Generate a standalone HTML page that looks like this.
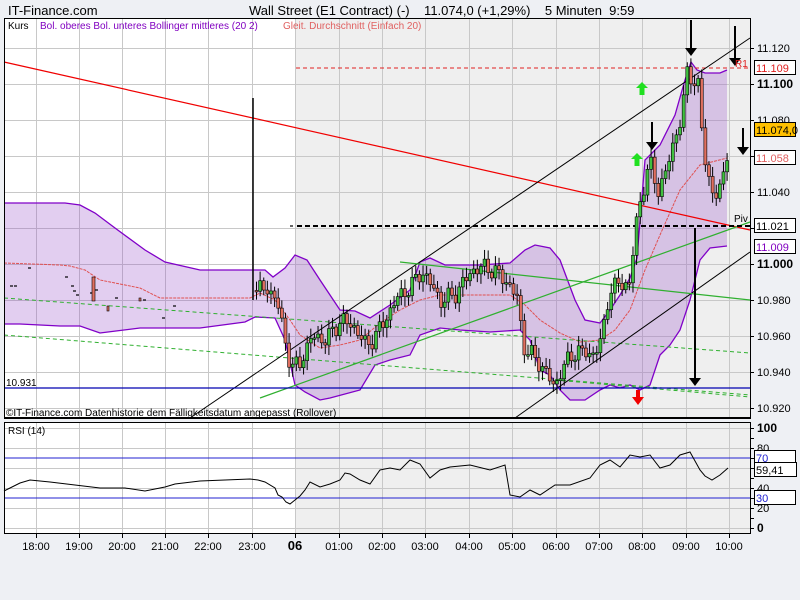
<!DOCTYPE html>
<html><head><meta charset="utf-8"><style>
html,body{margin:0;padding:0;background:#eef0f4;width:800px;height:600px;overflow:hidden}
svg{display:block;font-family:"Liberation Sans",sans-serif}
</style></head><body>
<svg id="s" width="800" height="600" xmlns="http://www.w3.org/2000/svg">
<rect width="800" height="600" fill="#eef0f4"/>
<text x="8" y="15" font-size="13" fill="#000">IT-Finance.com</text>
<text x="249" y="15" font-size="13" fill="#000" xml:space="preserve">Wall Street (E1 Contract) (-)    11.074,0 (+1,29%)    5 Minuten  9:59</text>
<rect x="4" y="18" width="746" height="400" fill="#fff"/>
<rect x="296" y="18" width="454" height="400" fill="#efefef"/>
<rect x="4" y="422" width="746" height="111" fill="#fff"/>
<rect x="296" y="422" width="454" height="111" fill="#efefef"/>
<g id="grid" stroke="#c8c8c8" stroke-width="1"></g>
<g id="bands"></g>
<g id="lines"></g>
<g id="candles"></g>
<g id="over"></g>
<rect x="4.5" y="18.5" width="746" height="400" fill="none" stroke="#000"/>
<line x1="4" y1="418" x2="751" y2="418" stroke="#000" stroke-width="2"/>
<rect x="4.5" y="422.5" width="746" height="111" fill="none" stroke="#000"/>
<text x="8" y="29" font-size="10">Kurs</text>
<text x="40" y="29" font-size="10" fill="#8000c0">Bol. oberes Bol. unteres Bollinger mittleres (20 2)</text>
<text x="283" y="29" font-size="10" fill="#e06060">Gleit. Durchschnitt (Einfach 20)</text>
<text x="6" y="386" font-size="10">10.931</text>
<text x="6" y="416" font-size="10">©IT-Finance.com  Datenhistorie dem Fälligkeitsdatum angepasst (Rollover)</text>
<text x="8" y="434" font-size="10">RSI (14)</text>
<g id="axis" font-size="11"></g>
</svg>
<script>
const NS="http://www.w3.org/2000/svg";
function el(p,t,a,txt){const e=document.createElementNS(NS,t);for(const k in a)e.setAttribute(k,a[k]);if(txt!=null)e.textContent=txt;document.getElementById(p).appendChild(e);return e;}
const hx=[36,79,122,165,208,252,295,339,382,425,469,512,556,599,642,686,729];
const hl=["18:00","19:00","20:00","21:00","22:00","23:00","06","01:00","02:00","03:00","04:00","05:00","06:00","07:00","08:00","09:00","10:00"];
hx.forEach((x,i)=>{el("grid","line",{x1:x+.5,y1:18,x2:x+.5,y2:418});el("grid","line",{x1:x+.5,y1:422,x2:x+.5,y2:533});
 el("axis","line",{x1:x+.5,y1:534,x2:x+.5,y2:538,stroke:"#000"});
 el("axis","text",{x:x,y:550,"text-anchor":"middle","font-weight":i==6?"bold":"normal","font-size":i==6?13:11},hl[i]);});
for(let i=0;i<11;i++){const y=48+i*36;el("grid","line",{x1:4,y1:y+.5,x2:750,y2:y+.5});
 el("axis","line",{x1:750,y1:y+.5,x2:754,y2:y+.5,stroke:"#000"});
 const v=(11120-i*20);const s=(v/1000).toFixed(3);const b=(v%100==0);
 el("axis","text",{x:757,y:y+4,"font-weight":b?"bold":"normal","font-size":b?12:11},s);}
for(let i=0;i<=10;i++){const y=528-i*10;if(i%2==0){el("grid","line",{x1:4,y1:y+.5,x2:750,y2:y+.5});}
 el("axis","line",{x1:750,y1:y+.5,x2:754,y2:y+.5,stroke:"#000"});}
[[100,"bold"],[80,""],[40,""],[20,""],[0,"bold"]].forEach(([v,w])=>el("axis","text",{x:757,y:528-v+4,"font-weight":w||"normal","font-size":w?12:11},String(v)));
const up=[[4,203],[65,203],[80,205],[95,213],[115,228],[145,250],[165,262],[200,270],[265,270],[273,277],[285,268],[295,255],[307,260],[320,280],[340,310],[355,311],[370,318],[390,305],[410,290],[420,262],[430,258],[445,265],[480,265],[510,263],[525,250],[535,245],[550,248],[560,260],[575,300],[585,320],[600,323],[610,310],[620,295],[630,278],[637,258],[645,160],[660,145],[675,115],[685,80],[691,62],[697,70],[705,73],[720,73],[727,70]];
const lo=[[727,246],[710,248],[700,260],[690,300],[680,330],[670,345],[660,355],[650,385],[640,390],[630,385],[620,388],[610,385],[600,390],[585,400],[570,400],[560,390],[550,375],[540,370],[530,340],[520,330],[490,332],[460,330],[440,328],[420,335],[410,355],[390,360],[375,365],[360,390],[330,398],[320,400],[305,392],[295,385],[285,340],[275,318],[255,317],[245,322],[200,328],[140,328],[100,333],[80,326],[60,326],[20,324],[4,324]];
const pts=up.concat(lo).map(p=>p.join(",")).join(" ");
el("bands","polygon",{points:pts,fill:"rgba(150,80,200,0.28)"});
el("bands","polyline",{points:up.map(p=>p.join(",")).join(" "),fill:"none",stroke:"#8000c8","stroke-width":1.3});
el("bands","polyline",{points:lo.map(p=>p.join(",")).join(" "),fill:"none",stroke:"#8000c8","stroke-width":1.3});
const ma=[[4,263],[60,265],[70,266],[85,270],[100,280],[140,288],[150,293],[160,298],[250,298],[260,293],[275,300],[290,320],[300,335],[320,348],[340,345],[360,340],[380,323],[400,310],[420,300],[440,295],[480,295],[510,295],[525,305],[540,320],[560,333],[580,342],[600,340],[615,330],[630,310],[645,270],[660,235],[680,190],[700,165],[727,158]];
el("bands","polyline",{points:ma.map(p=>p.join(",")).join(" "),fill:"none",stroke:"#e05050","stroke-width":1,"stroke-dasharray":"3,1"});
const L=(x1,y1,x2,y2,c,w,d)=>el("lines","line",{x1,y1,x2,y2,stroke:c,"stroke-width":w||1,"stroke-dasharray":d||"none"});
L(4,298,750,353,"#30b030",1,"4,3");L(4,335,750,395,"#30b030",1,"4,3");L(555,380,750,397,"#30b030",1,"4,3");
L(296,68,750,68,"#e02020",1,"4,3");
L(4,62,750,230,"#f00000",1.2);
L(190,418,750,38,"#000",1);L(515,418,750,252,"#000",1);
L(260,398,750,222,"#30b030",1.2);L(400,262,750,300,"#30b030",1.2);
L(297,226,750,226,"#000",2,"5,3");
L(4,388,750,388,"#0000b0",1.3);
L(253,98,253,300,"#000",1.5);
const path=[[252,290],[265,292],[275,305],[283,345],[290,378],[300,370],[310,345],[325,345],[340,320],[355,325],[365,340],[380,318],[395,290],[410,280],[420,268],[430,285],[440,305],[455,300],[470,280],[485,275],[500,282],[510,290],[516,300],[522,345],[535,355],[545,365],[553,380],[560,360],[575,342],[590,350],[600,340],[608,290],[620,288],[628,290],[635,230],[640,205],[648,170],[656,200],[663,185],[672,150],[680,120],[686,75],[692,80],[697,85],[702,150],[710,185],[716,190],[720,180],[726,140]];
function py(x){for(let i=1;i<path.length;i++){if(x<=path[i][0]){const a=path[i-1],b=path[i];return a[1]+(b[1]-a[1])*(x-a[0])/(b[0]-a[0]);}}return path[path.length-1][1];}
let prev=py(255);
for(let x=255;x<=726;x+=3.62){const tgt=py(x)+Math.sin(x*1.7)*9+Math.sin(x*0.53)*6+Math.cos(x*3.1)*4;const o=prev,c=tgt;const hi=Math.min(o,c)-3-Math.abs(Math.sin(x*2.3))*7,l=Math.max(o,c)+3+Math.abs(Math.cos(x*1.9))*7;
 el("candles","line",{x1:x+1.5,y1:hi,x2:x+1.5,y2:l,stroke:"#000"});
 const g=c<o;el("candles","rect",{x:x,y:Math.min(o,c),width:3,height:Math.max(1.5,Math.abs(c-o)),fill:g?"#40c040":"#e07060",stroke:"#000","stroke-width":.6});prev=c;}
[[10,286],[14,286],[28,268],[65,277],[71,286],[73,291],[76,295],[90,293],[95,290],[115,298],[143,300],[162,318],[173,306],[290,226]].forEach(p=>L(p[0],p[1],p[0]+3,p[1],"#000",1.2));
el("candles","rect",{x:92,y:277,width:3,height:24,fill:"#e07060",stroke:"#000","stroke-width":.6});
el("candles","rect",{x:107,y:306,width:2,height:5,fill:"#e07060",stroke:"#000","stroke-width":.6});
el("candles","rect",{x:139,y:298,width:2,height:3,fill:"#e07060",stroke:"#000","stroke-width":.6});
function dn(x,y1,y2){L(x,y1,x,y2-6,"#000",2);el("over","polygon",{points:`${x-6},${y2-8} ${x+6},${y2-8} ${x},${y2}`,fill:"#000"});}
dn(691,20,56);dn(735,26,66);dn(652,122,150);dn(743,128,155);dn(695,228,386);
function upA(x,y,c){el("over","polygon",{points:`${x},${y} ${x+6},${y+6} ${x+2.5},${y+6} ${x+2.5},${y+13} ${x-2.5},${y+13} ${x-2.5},${y+6} ${x-6},${y+6}`,fill:c});}
upA(642,82,"#20e020");upA(637,153,"#20e020");
el("over","polygon",{points:`636,390 640,390 640,397 644,397 638,405 632,397 636,397`,fill:"#f00000"});
el("over","text",{x:735,y:67,"font-size":10,fill:"#e02020"},"R1");
el("over","text",{x:734,y:222,"font-size":10,fill:"#000"},"Piv");
function box(y,t,c,bg){el("axis","rect",{x:754.5,y:y-7.5,width:41,height:14,fill:bg,stroke:"#000"});el("axis","text",{x:756,y:y+4,fill:c,"font-size":11},t);}
box(68,"11.109","#e02020","#fff");box(130,"11.074,0","#000","#ffc000");box(158,"11.058","#e06060","#fff");box(226,"11.021","#000","#fff");box(247,"11.009","#8000c0","#fff");
L(4,458,750,458,"#2020d0",1);L(4,498,750,498,"#2020d0",1);
const r=[[4,491],[10,488],[20,483],[30,480],[50,482],[75,485],[100,488],[125,488],[145,491],[165,487],[175,484],[200,481],[250,479],[258,480],[265,482],[275,488],[278,495],[282,497],[286,502],[290,504],[295,500],[300,496],[305,490],[310,482],[320,487],[330,484],[340,480],[345,473],[350,474],[360,480],[370,484],[380,470],[390,468],[400,470],[410,460],[420,464],[430,478],[440,470],[450,467],[470,465],[490,470],[505,465],[510,495],[520,497],[530,490],[540,495],[555,485],[570,485],[590,478],[600,465],[610,460],[620,467],[630,455],[640,457],[650,455],[660,468],[670,465],[680,455],[690,452],[700,470],[705,476],[712,480],[720,475],[728,468]];
el("over","polyline",{points:r.map(p=>p.join(",")).join(" "),fill:"none",stroke:"#000","stroke-width":1});
box(458,"70","#2020d0","#fff");box(498,"30","#2020d0","#fff");
el("axis","rect",{x:754.5,y:462.5,width:42,height:14,fill:"#fff",stroke:"#000"});el("axis","text",{x:756,y:474,"font-size":11},"59,41");
</script>
</body></html>
